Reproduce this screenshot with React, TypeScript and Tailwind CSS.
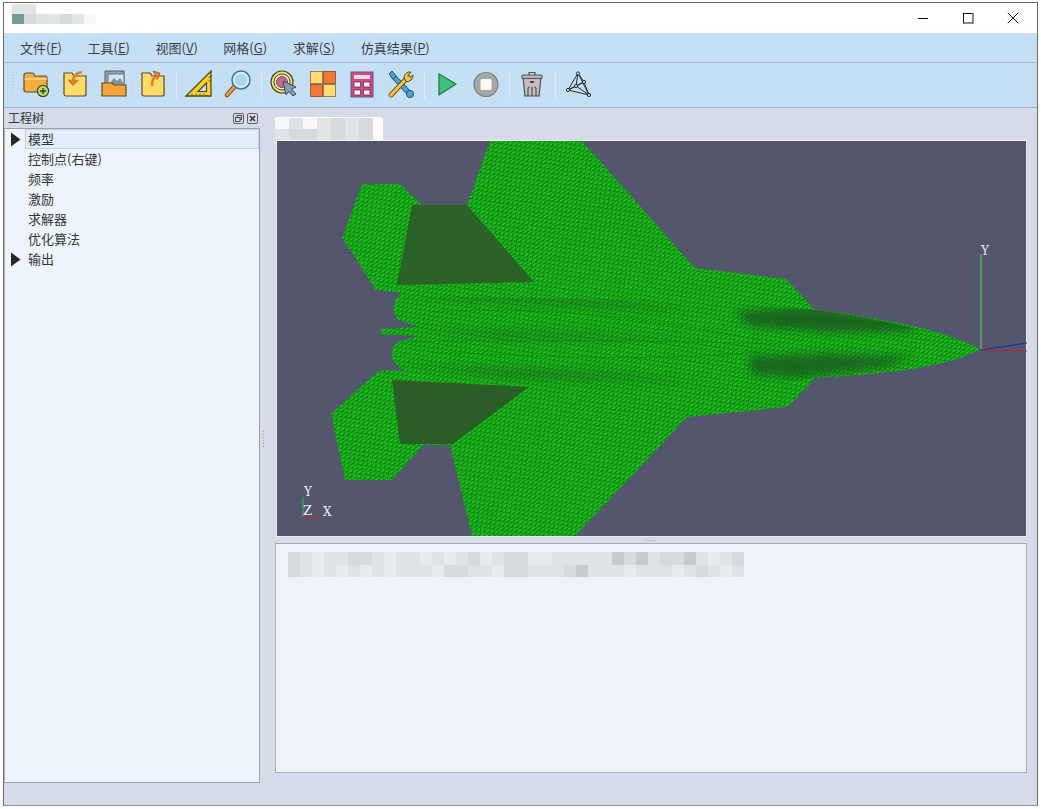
import React from 'react';

const cjk = "font-['Microsoft_YaHei','Noto_Sans_CJK_SC','Noto_Sans',sans-serif]";

const shades: Record<string, string> = {
  a: 'bg-[#eef2f8]',
  b: 'bg-[#e7ebf0]',
  c: 'bg-[#dfe3e8]',
  d: 'bg-[#d6dade]',
  e: 'bg-[#c9cccf]',
  f: 'bg-[#f7f8f9]',
  g: 'bg-[#e2e4e6]',
  h: 'bg-[#cfd2d4]',
  t: 'bg-[#6f9d91]',
  w: 'bg-[#ffffff]',
};

const Mosaic: React.FC<{ rows: string[]; cell: number; rowH: number }> = ({ rows, cell, rowH }) => (
  <div className="flex flex-col">
    {rows.map((row, i) => (
      <div key={i} className="flex" style={{ height: rowH }}>
        {row.split('').map((c, j) => (
          <div key={j} className={shades[c]} style={{ width: cell }} />
        ))}
      </div>
    ))}
  </div>
);

const MenuItem: React.FC<{ label: string; k: string }> = ({ label, k }) => (
  <span className="text-[13px] leading-[18px] text-[#3a3f46]">
    {label}(<span className="underline">{k}</span>)
  </span>
);

const Sep = () => (
  <div className="w-[7px] flex justify-center">
    <div className="w-px h-[28px] bg-[#dfeaf5]" />
  </div>
);

const Btn: React.FC<{ children: React.ReactNode }> = ({ children }) => (
  <div className="w-[39px] flex items-center justify-center mb-[2px]">
    <svg width="30" height="30" viewBox="0 0 30 30">{children}</svg>
  </div>
);

const TreeRow: React.FC<{ label: string; arrow?: boolean; selected?: boolean }> = ({ label, arrow, selected }) => (
  <div className="flex h-5 items-center">
    <div className="w-[20px] flex justify-center pl-[1px]">
      {arrow && (
        <svg width="11" height="15" viewBox="0 0 11 15">
          <path d="M1 0.5L10.5 7.5L1 14.5Z" fill="#23272c" />
        </svg>
      )}
    </div>
    <div
      className={
        'flex-1 h-5 flex items-center pl-[2px] border ' +
        (selected ? 'bg-[#e3eefa] border-[#bcd5ec]' : 'border-transparent')
      }
    >
      <span className="text-[13px] leading-[18px] text-[#33373d]">{label}</span>
    </div>
  </div>
);

const Aircraft = () => (
  <svg className="block" width="750" height="395" viewBox="277 141 750 395">
    <defs>
      <pattern id="mesh" width="4.5" height="4.5" patternUnits="userSpaceOnUse" patternTransform="rotate(8)">
        <rect width="4.5" height="4.5" fill="#1cbf1c" />
        <path d="M0 0H4.5M0 0V4.5M0 4.5L4.5 0" stroke="#0b6410" strokeWidth="0.8" fill="none" />
      </pattern>
      <clipPath id="body">
        <path d="M980 349C950 335 900 322 815 310L700 300L400 296L390 350L400 372L700 400L815 378C880 372 950 366 980 349Z" />
      </clipPath>
      <filter id="soft" x="-20%" y="-50%" width="140%" height="200%">
        <feGaussianBlur stdDeviation="4" />
      </filter>
    </defs>
    <path
      d="M980 349C950 333 900 320 815 310L786 279L695 268L582 141L490 141L467 205L422 205L400 184L362 184L342 238L376 290L402 293C392 299 392 312 398 320L418 327L380 329L380 334L418 336L398 342C388 350 390 364 405 370L378 371L331 414L345 480L392 480L423 445L450 445L472 536L575 536L687 417L788 407L815 378C880 374 950 368 980 349Z"
      fill="url(#mesh)"
    />
    <g clipPath="url(#body)">
      <path d="M735 312L815 306L910 322L915 331L830 332L750 326Z" fill="#1f5f24" opacity="0.9" filter="url(#soft)" />
      <path d="M750 356L830 354L915 357L880 368L800 378L750 374Z" fill="#1f5f24" opacity="0.85" filter="url(#soft)" />
      <path d="M400 296C480 292 600 296 700 312L520 302Z" fill="#1d5f24" opacity="0.55" filter="url(#soft)" />
      <path d="M400 328C500 330 600 332 700 340L500 338Z" fill="#1d5f24" opacity="0.4" filter="url(#soft)" />
      <path d="M405 368C480 366 600 370 700 382L520 378Z" fill="#1d5f24" opacity="0.5" filter="url(#soft)" />
      <path d="M430 312C540 306 640 316 760 340M430 352C540 356 640 362 760 352M400 342C520 340 640 340 780 344" fill="none" stroke="#0b5a12" strokeWidth="0.8" opacity="0.35" />
    </g>
    <path d="M412 205L467 205L534 282L397 285Z" fill="#2b6228" />
    <path d="M392 380L529 387L453 444L400 444Z" fill="#2b5e27" />
    <path d="M981 349V254" stroke="#40c266" strokeWidth="1.4" />
    <path d="M982.5 349V254" stroke="#7d4b5c" strokeWidth="0.8" />
    <path d="M981 350L1027 343" stroke="#1d2fb0" strokeWidth="1.2" />
    <path d="M981 350L1027 351" stroke="#b0242c" strokeWidth="1.2" />
    <text x="981" y="255" fontSize="12" fontFamily="'DejaVu Serif',serif" fill="#e6e8ee">Y</text>
    <path d="M303 517V497" stroke="#3fb356" strokeWidth="1" />
    <path d="M303 517H321" stroke="#c02a34" strokeWidth="1" />
    <text x="304" y="496" fontSize="12" fontFamily="'DejaVu Serif',serif" fill="#eef0f4">Y</text>
    <text x="303" y="515" fontSize="13" fontFamily="'DejaVu Serif',serif" fill="#eef0f4">Z</text>
    <text x="323" y="516" fontSize="12" fontFamily="'DejaVu Serif',serif" fill="#eef0f4">X</text>
  </svg>
);

export default function App() {
  return (
    <div className={'w-[1041px] h-[809px] bg-white pt-[2px] pl-[3px] pr-[3px] pb-[3px] overflow-hidden ' + cjk}>
      <div className="w-full h-full border border-[#6a6a6a] border-b-[#8a8f96] flex flex-col bg-[#d5dbe8]">
        {/* title bar */}
        <div className="h-[30px] bg-white flex items-center pl-2 pr-[2px]">
          <div className="mb-[8px]">
            <Mosaic cell={12} rowH={10} rows={['ggwwwww', 'tdcgdgf']} />
          </div>
          <div className="flex-1" />
          <div className="w-[45px] flex justify-center">
            <svg width="12" height="12" viewBox="0 0 12 12">
              <path d="M1 6.5H11" stroke="#111" strokeWidth="1" />
            </svg>
          </div>
          <div className="w-[45px] flex justify-center">
            <svg width="12" height="12" viewBox="0 0 12 12">
              <rect x="1.5" y="1.5" width="9.5" height="9.5" fill="none" stroke="#111" strokeWidth="1" />
            </svg>
          </div>
          <div className="w-[45px] flex justify-center">
            <svg width="12" height="12" viewBox="0 0 12 12">
              <path d="M0.8 0.8L11.2 11.2M11.2 0.8L0.8 11.2" stroke="#111" strokeWidth="1" />
            </svg>
          </div>
        </div>

        {/* menu bar */}
        <div className="h-[30px] bg-[#c5dff5] border-b border-[#a8bccd] flex items-center pl-[16px] gap-[25.5px]">
          <MenuItem label="文件" k="F" />
          <MenuItem label="工具" k="E" />
          <MenuItem label="视图" k="V" />
          <MenuItem label="网格" k="G" />
          <MenuItem label="求解" k="S" />
          <MenuItem label="仿真结果" k="P" />
        </div>

        {/* tool bar */}
        <div className="h-[45px] bg-[#c5dff5] border-b border-[#a5adb8] flex items-center">
          <div className="w-[12.5px] flex justify-end pr-[2px]">
            <div className="w-[4px] h-[26px] mb-[2px] bg-[radial-gradient(#a9c0d6_1px,transparent_1px)] bg-[length:3px_3px]" />
          </div>
          <Btn>
            <path d="M3 6a2 2 0 0 1 2-2h7l2 3h10a2 2 0 0 1 2 2v14H5a2 2 0 0 1-2-2Z" fill="#f5ad3c" stroke="#5d4a2c" strokeWidth="1.2" />
            <path d="M3.6 10H26" stroke="#ffd980" strokeWidth="1.6" />
            <circle cx="22" cy="22" r="5.6" fill="#b7d96a" stroke="#3c4a2a" strokeWidth="1.2" />
            <path d="M22 19v6M19 22h6" stroke="#2d3a20" strokeWidth="1.3" />
          </Btn>
          <Btn>
            <path d="M4 4h8l2 3h12v18a2 2 0 0 1-2 2H6a2 2 0 0 1-2-2Z" fill="#ffdc68" stroke="#5b4d28" strokeWidth="1.2" />
            <path d="M22 3c-6 1-9 5-9 10" fill="none" stroke="#e8792f" strokeWidth="2.6" />
            <path d="M8 10.5l5 6 5.5-5.5" fill="#e8792f" stroke="#8a4a20" strokeWidth="0.6" />
          </Btn>
          <Btn>
            <path d="M6 2h19v14H6Z" fill="#8fa4b3" stroke="#54616d" strokeWidth="1" />
            <path d="M9 5h16v11H9Z" fill="#d7e3ec" stroke="#54616d" strokeWidth="0.8" />
            <path d="M10 15l5-6 3 3 3-3 4 6Z" fill="#7c93a4" />
            <path d="M3 14h10l2 2h12v11H3Z" fill="#f5a23a" stroke="#6a4b22" strokeWidth="1.2" />
          </Btn>
          <Btn>
            <path d="M4 4h8l2 3h12v18a2 2 0 0 1-2 2H6a2 2 0 0 1-2-2Z" fill="#ffdc68" stroke="#5b4d28" strokeWidth="1.2" />
            <path d="M14 17c0-6 1-8 5-11" fill="none" stroke="#e8792f" strokeWidth="2.6" />
            <path d="M15 2l7 2-2.5 6.5Z" fill="#e8792f" stroke="#8a4a20" strokeWidth="0.6" />
          </Btn>
          <Sep />
          <Btn>
            <path d="M2 27L27 2V27Z" fill="#f6d128" stroke="#4f4a1e" strokeWidth="1.3" />
            <path d="M14 22.5L22.5 14V22.5Z" fill="#c5dff5" stroke="#4f4a1e" strokeWidth="1.2" />
            <path d="M8 26.5v-2M12 26.5v-2M16 26.5v-2M20 26.5v-2M26.5 8h-2M26.5 12h-2" stroke="#4f4a1e" strokeWidth="0.8" />
          </Btn>
          <Btn>
            <path d="M12 17L4 26" stroke="#5a4226" strokeWidth="4.6" strokeLinecap="round" />
            <path d="M12 17L4 26" stroke="#f09a3a" strokeWidth="3" strokeLinecap="round" />
            <circle cx="18" cy="11" r="9" fill="#dbeefb" stroke="#47708f" strokeWidth="1.5" />
            <circle cx="18" cy="11" r="6.2" fill="#a8d8f5" />
          </Btn>
          <Sep />
          <Btn>
            <circle cx="13" cy="13" r="11" fill="#f2d97a" stroke="#4d4632" strokeWidth="1.2" />
            <circle cx="13" cy="13" r="8" fill="#fbeebb" stroke="#4d4632" strokeWidth="1" />
            <circle cx="13" cy="13" r="5.5" fill="#c9668a" stroke="#4d4632" strokeWidth="0.8" />
            <path d="M14 12L27 18L22.5 20L27 25L24 27L20 22.5L17 26Z" fill="#7f9cb2" stroke="#3e4c59" strokeWidth="1" />
          </Btn>
          <Btn>
            <rect x="2.5" y="2.5" width="12" height="12" fill="#ffdd72" stroke="#8a6a36" strokeWidth="0.8" />
            <rect x="15.5" y="2.5" width="12" height="12" fill="#f3763a" stroke="#8a4a26" strokeWidth="0.8" />
            <rect x="2.5" y="15.5" width="12" height="12" fill="#f3763a" stroke="#8a4a26" strokeWidth="0.8" />
            <rect x="15.5" y="15.5" width="12" height="12" fill="#ffdd72" stroke="#8a6a36" strokeWidth="0.8" />
          </Btn>
          <Btn>
            <rect x="4" y="3" width="22" height="25" fill="#d4487f" stroke="#5c5a82" strokeWidth="1" />
            <rect x="7" y="6" width="16" height="4" fill="#e8dbe6" />
            <rect x="7" y="13" width="6.5" height="5" fill="#f6eef3" stroke="#5c3350" strokeWidth="0.8" />
            <rect x="16.5" y="13" width="6.5" height="5" fill="#f6eef3" stroke="#5c3350" strokeWidth="0.8" />
            <rect x="7" y="21" width="6.5" height="5" fill="#f6eef3" stroke="#5c3350" strokeWidth="0.8" />
            <rect x="16.5" y="21" width="6.5" height="5" fill="#f6eef3" stroke="#5c3350" strokeWidth="0.8" />
          </Btn>
          <Btn>
            <path d="M7 7L24 25" stroke="#28506e" strokeWidth="5.2" strokeLinecap="round" />
            <path d="M7 7L24 25" stroke="#4da3d8" strokeWidth="3.4" strokeLinecap="round" />
            <path d="M3 5L6 2L10 7L7 10Z" fill="#4da3d8" stroke="#28506e" strokeWidth="1" />
            <circle cx="24" cy="25" r="3.6" fill="#4da3d8" stroke="#28506e" strokeWidth="1" />
            <path d="M5 26L22 8" stroke="#5a4a20" strokeWidth="4.8" strokeLinecap="round" />
            <path d="M5 26L22 8" stroke="#f4c63e" strokeWidth="3.2" strokeLinecap="round" />
            <path d="M18 9a6 6 0 0 1 7-6l-3 3.4 2 2L27 6a6 6 0 0 1-7 6.5Z" fill="#f4c63e" stroke="#5a4a20" strokeWidth="1" />
          </Btn>
          <Sep />
          <Btn>
            <path d="M7 5L24 15L7 26Z" fill="#40c078" stroke="#1f7a4b" strokeWidth="1.3" strokeLinejoin="round" />
          </Btn>
          <Btn>
            <circle cx="15" cy="15.5" r="12" fill="#a5a8a8" stroke="#7d8383" strokeWidth="1.2" />
            <rect x="9.5" y="10" width="11" height="11" rx="1.5" fill="#fbfbf8" />
          </Btn>
          <Sep />
          <Btn>
            <path d="M6 8h18l-2 19H8Z" fill="#c9bcc0" stroke="#49505a" strokeWidth="1.2" />
            <rect x="5" y="6" width="20" height="3.5" rx="1" fill="#b7b2b4" stroke="#49505a" strokeWidth="1.1" />
            <path d="M12 6V3.5h6V6" fill="none" stroke="#49505a" strokeWidth="1.2" />
            <path d="M11 27v-7a2 2 0 0 1 2-2M15 27v-9M19 27v-7a2 2 0 0 0-2-2" fill="none" stroke="#49505a" strokeWidth="1.2" />
            <rect x="13" y="12" width="4" height="2" fill="#49505a" />
          </Btn>
          <Sep />
          <Btn>
            <path d="M15 4L5 21L26 26L21 13ZM15 4L13 17L26 26M5 21L21 13M13 17L5 21M15 4L26 26M13 17L21 13" fill="none" stroke="#252b35" strokeWidth="1" />
            <g fill="#c5dff5" stroke="#252b35" strokeWidth="1">
              <circle cx="15" cy="4.5" r="1.6" />
              <circle cx="5" cy="21" r="1.6" />
              <circle cx="26" cy="26" r="1.6" />
              <circle cx="21" cy="13" r="1.6" />
              <circle cx="13" cy="17" r="1.6" />
            </g>
          </Btn>
        </div>

        {/* main area */}
        <div className="flex-1 flex min-h-0">
          {/* dock: project tree */}
          <div className="w-[256px] flex flex-col pb-[22px]">
            <div className="h-5 flex items-center pl-1 pr-[1px]">
              <span className="text-[12px] leading-4 text-[#33363c]">工程树</span>
              <div className="flex-1" />
              <div className="flex gap-[3px] mr-[1px]">
                <svg width="11" height="11" viewBox="0 0 11 11">
                  <rect x="0.5" y="0.5" width="10" height="10" rx="1.5" fill="#d5dbe8" stroke="#5f646d" />
                  <rect x="4" y="2.5" width="4.5" height="4" fill="none" stroke="#4a4e55" />
                  <rect x="2.5" y="4.5" width="4.5" height="4" fill="#d5dbe8" stroke="#4a4e55" />
                </svg>
                <svg width="11" height="11" viewBox="0 0 11 11">
                  <rect x="0.5" y="0.5" width="10" height="10" rx="1.5" fill="#d5dbe8" stroke="#5f646d" />
                  <path d="M3 3L8 8M8 3L3 8" stroke="#33363c" strokeWidth="1.6" />
                </svg>
              </div>
            </div>
            <div className="flex-1 bg-[#eef4fb] border border-[#9aa2ad] border-l-[#b4bac3]">
              <TreeRow label="模型" arrow selected />
              <TreeRow label="控制点(右键)" />
              <TreeRow label="频率" />
              <TreeRow label="激励" />
              <TreeRow label="求解器" />
              <TreeRow label="优化算法" />
              <TreeRow label="输出" arrow />
            </div>
          </div>

          {/* vertical splitter */}
          <div className="w-[15px] flex items-center pl-[2px] pb-[36px]">
            <div className="w-[3px] h-[18px] bg-[radial-gradient(#9aa2ad_1px,transparent_1px)] bg-[length:3px_3px]" />
          </div>

          {/* right side */}
          <div className="w-[752px] flex flex-col pt-[9px]">
            <div className="h-[23px] w-[108px] bg-white rounded-t-[3px] overflow-hidden pt-[1px]">
              <Mosaic cell={14} rowH={11} rows={['fcfgdcd', 'gddgdcd']} />
            </div>
            <div className="ml-[1px] h-[397px] border border-[#e8ebf0] border-t-[#f5f6f8] bg-[#54566e]">
              <Aircraft />
            </div>
            <div className="h-[6px] flex justify-center">
              <div className="w-[12px] h-[3px] mt-[2px] bg-[radial-gradient(#aab1bc_1px,transparent_1px)] bg-[length:3px_3px]" />
            </div>
            <div className="h-[230px] bg-[#eef3f9] border border-[#a9afb9] pt-[8px] pl-[12px]">
              <Mosaic
                cell={12}
                rowH={12.5}
                rows={[
                  'dcbccddcbccbcbcdbcddbbcccccedecddecbcd',
                  'dcbcbcbcbcccbddccbddcccdecccbcccbcdcbc',
                ]}
              />
            </div>
            <div className="flex-1" />
          </div>
        </div>
      </div>
    </div>
  );
}
